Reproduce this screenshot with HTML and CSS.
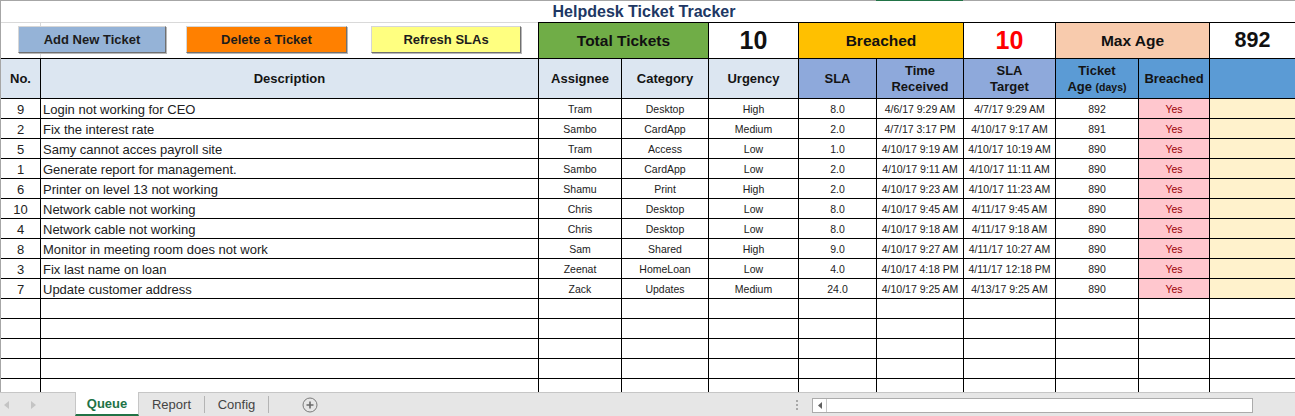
FILE: index.html
```html
<!DOCTYPE html>
<html lang="en">
<head>
  <meta charset="UTF-8" />
  <title>Helpdesk Ticket Tracker</title>
  <link rel="stylesheet" href="styles.css">
</head>
<body>

  <div class="sheet">
    <!-- Title -->
    <div class="title-row">
      <span class="sheet-title">Helpdesk Ticket Tracker</span>
    </div>

    <!-- Buttons + summary -->
    <div class="kpi-row">
      <div class="actions">
        <button class="btn btn-add" type="button">Add New Ticket</button>
        <button class="btn btn-delete" type="button">Delete a Ticket</button>
        <button class="btn btn-refresh" type="button">Refresh SLAs</button>
      </div>
      <div class="kpi kpi-total">Total Tickets</div>
      <div class="kpi kpi-value">10</div>
      <div class="kpi kpi-breached">Breached</div>
      <div class="kpi kpi-value kpi-red">10</div>
      <div class="kpi kpi-age">Max Age</div>
      <div class="kpi kpi-value kpi-small">892</div>
    </div>

    <table class="tickets">
      <colgroup>
        <col class="c-no">
        <col class="c-desc">
        <col class="c-assignee">
        <col class="c-category">
        <col class="c-urgency">
        <col class="c-sla">
        <col class="c-received">
        <col class="c-target">
        <col class="c-age">
        <col class="c-breached">
        <col class="c-extra">
      </colgroup>
      <thead>
        <tr>
          <th class="h-light">No.</th>
          <th class="h-light">Description</th>
          <th class="h-light">Assignee</th>
          <th class="h-light">Category</th>
          <th class="h-light">Urgency</th>
          <th class="h-mid">SLA</th>
          <th class="h-mid">Time<br>Received</th>
          <th class="h-mid">SLA<br>Target</th>
          <th class="h-dark">Ticket<br>Age <span class="days">(days)</span></th>
          <th class="h-dark">Breached</th>
          <th class="h-dark"></th>
        </tr>
      </thead>
      <tbody>
        <tr><td class="num">9</td><td class="desc">Login not working for CEO</td><td>Tram</td><td>Desktop</td><td>High</td><td>8.0</td><td>4/6/17 9:29 AM</td><td>4/7/17 9:29 AM</td><td>892</td><td class="yes">Yes</td><td class="note"></td></tr>
        <tr><td class="num">2</td><td class="desc">Fix the interest rate</td><td>Sambo</td><td>CardApp</td><td>Medium</td><td>2.0</td><td>4/7/17 3:17 PM</td><td>4/10/17 9:17 AM</td><td>891</td><td class="yes">Yes</td><td class="note"></td></tr>
        <tr><td class="num">5</td><td class="desc">Samy cannot acces payroll site</td><td>Tram</td><td>Access</td><td>Low</td><td>1.0</td><td>4/10/17 9:19 AM</td><td>4/10/17 10:19 AM</td><td>890</td><td class="yes">Yes</td><td class="note"></td></tr>
        <tr><td class="num">1</td><td class="desc">Generate report for management.</td><td>Sambo</td><td>CardApp</td><td>Low</td><td>2.0</td><td>4/10/17 9:11 AM</td><td>4/10/17 11:11 AM</td><td>890</td><td class="yes">Yes</td><td class="note"></td></tr>
        <tr><td class="num">6</td><td class="desc">Printer on level 13 not working</td><td>Shamu</td><td>Print</td><td>High</td><td>2.0</td><td>4/10/17 9:23 AM</td><td>4/10/17 11:23 AM</td><td>890</td><td class="yes">Yes</td><td class="note"></td></tr>
        <tr><td class="num">10</td><td class="desc">Network cable not working</td><td>Chris</td><td>Desktop</td><td>Low</td><td>8.0</td><td>4/10/17 9:45 AM</td><td>4/11/17 9:45 AM</td><td>890</td><td class="yes">Yes</td><td class="note"></td></tr>
        <tr><td class="num">4</td><td class="desc">Network cable not working</td><td>Chris</td><td>Desktop</td><td>Low</td><td>8.0</td><td>4/10/17 9:18 AM</td><td>4/11/17 9:18 AM</td><td>890</td><td class="yes">Yes</td><td class="note"></td></tr>
        <tr><td class="num">8</td><td class="desc">Monitor in meeting room does not work</td><td>Sam</td><td>Shared</td><td>High</td><td>9.0</td><td>4/10/17 9:27 AM</td><td>4/11/17 10:27 AM</td><td>890</td><td class="yes">Yes</td><td class="note"></td></tr>
        <tr><td class="num">3</td><td class="desc">Fix last name on loan</td><td>Zeenat</td><td>HomeLoan</td><td>Low</td><td>4.0</td><td>4/10/17 4:18 PM</td><td>4/11/17 12:18 PM</td><td>890</td><td class="yes">Yes</td><td class="note"></td></tr>
        <tr><td class="num">7</td><td class="desc">Update customer address</td><td>Zack</td><td>Updates</td><td>Medium</td><td>24.0</td><td>4/10/17 9:25 AM</td><td>4/13/17 9:25 AM</td><td>890</td><td class="yes">Yes</td><td class="note"></td></tr>
        <tr><td></td><td></td><td></td><td></td><td></td><td></td><td></td><td></td><td></td><td></td><td></td></tr>
        <tr><td></td><td></td><td></td><td></td><td></td><td></td><td></td><td></td><td></td><td></td><td></td></tr>
        <tr><td></td><td></td><td></td><td></td><td></td><td></td><td></td><td></td><td></td><td></td><td></td></tr>
        <tr><td></td><td></td><td></td><td></td><td></td><td></td><td></td><td></td><td></td><td></td><td></td></tr>
        <tr><td></td><td></td><td></td><td></td><td></td><td></td><td></td><td></td><td></td><td></td><td></td></tr>
      </tbody>
    </table>
  </div>

  <!-- Sheet tabs -->
  <div class="tabbar">
    <div class="tab-nav">
      <svg width="6" height="8" viewBox="0 0 6 8"><path d="M5 0 L0 4 L5 8 Z" fill="#c4c4c4"/></svg>
      <svg width="6" height="8" viewBox="0 0 6 8"><path d="M1 0 L6 4 L1 8 Z" fill="#c4c4c4"/></svg>
    </div>
    <div class="tab tab-active">Queue</div>
    <div class="tab tab-report">Report</div>
    <span class="tab-sep"></span>
    <div class="tab tab-config">Config</div>
    <span class="tab-sep"></span>
    <div class="tab-add">
      <svg width="16" height="16" viewBox="0 0 16 16">
        <circle cx="8" cy="8" r="7" fill="none" stroke="#7a7a7a" stroke-width="1"/>
        <path d="M8 4.5 V11.5 M4.5 8 H11.5" stroke="#6a6a6a" stroke-width="1.6"/>
      </svg>
    </div>
    <div class="spacer"></div>
    <div class="split-dots"><i></i><i></i><i></i></div>
    <div class="h-scroll">
      <div class="h-scroll-btn">
        <svg width="4" height="7" viewBox="0 0 4 7"><path d="M4 0 L0 3.5 L4 7 Z" fill="#606060"/></svg>
      </div>
    </div>
  </div>

</body>
</html>
```

FILE: styles.css
```css
:root {
  --grid: #000000;
  --soft-grid: #d9d9d9;
  --head-light: #dce6f1;
  --head-mid: #8ea9db;
  --head-dark: #5b9bd5;
  --text: #1a1a1a;
}

* {
  box-sizing: border-box;
}

html, body {
  margin: 0;
  padding: 0;
  overflow: hidden;
}

body {
  width: 1295px;
  height: 416px;
  font-family: "Liberation Sans", Arial, sans-serif;
  color: var(--text);
  background: #ffffff;
}

.sheet {
  height: 392px;
  overflow: hidden;
  border-left: 1px solid #a6a6a6;
}

/* title row */
.title-row {
  height: 22px;
  display: flex;
  align-items: center;
  justify-content: center;
  padding: 1px 8px 0 0;
  background: linear-gradient(to right, #a6a6a6 875px, #217346 875px, #217346 962px, #a6a6a6 962px) top left / 100% 1px no-repeat;
}

.sheet-title {
  font-size: 16px;
  font-weight: bold;
  color: #203764;
}

/* buttons and summary */
.kpi-row {
  height: 36px;
  display: grid;
  grid-template-columns: 537px 170px 90px 165px 92px 154px 1fr;
}

.actions {
  display: flex;
  align-items: center;
  padding: 0 0 2px 17px;
  border-top: 1px solid var(--soft-grid);
  background: linear-gradient(to right, transparent 39px, var(--soft-grid) 39px, var(--soft-grid) 40px, transparent 40px);
}

.btn {
  height: 27px;
  font-family: inherit;
  font-size: 13px;
  font-weight: bold;
  color: #1c1c1c;
  border: 1px solid;
  border-color: #d6d6d6 #707070 #707070 #d6d6d6;
  padding: 0;
  box-shadow: 1px 1px 0 #b8b8b8;
}

.btn-add {
  width: 148px;
  background: #95b3d7;
}

.btn-delete {
  width: 161px;
  margin-left: 20px;
  background: #ff8000;
}

.btn-refresh {
  width: 150px;
  margin-left: 24px;
  background: #ffff80;
}

.kpi {
  display: flex;
  align-items: center;
  justify-content: center;
  border-top: 1px solid var(--grid);
  border-left: 1px solid var(--grid);
  font-size: 15.5px;
  font-weight: bold;
  color: #111;
}

.kpi-total {
  background: #70ad47;
}

.kpi-breached {
  background: #ffc000;
}

.kpi-age {
  background: #f8cbad;
}

.kpi-value {
  background: #ffffff;
  font-size: 25px;
}

.kpi-red {
  color: #ff0000;
}

.kpi-small {
  font-size: 21.5px;
}

/* ticket table */
.tickets {
  width: 1295px;
  table-layout: fixed;
  border-collapse: separate;
  border-spacing: 0;
  border-top: 1px solid var(--grid);
}

.c-no { width: 40px; }
.c-desc { width: 498px; }
.c-assignee { width: 83px; }
.c-category { width: 87px; }
.c-urgency { width: 90px; }
.c-sla { width: 78px; }
.c-received { width: 87px; }
.c-target { width: 92px; }
.c-age { width: 83px; }
.c-breached { width: 71px; }
.c-extra { width: 86px; }

.tickets th,
.tickets td {
  border-right: 1px solid var(--grid);
  border-bottom: 1px solid var(--grid);
  padding: 0;
  white-space: nowrap;
  overflow: hidden;
}

.tickets thead tr {
  height: 40px;
}

.tickets th {
  font-size: 13px;
  font-weight: bold;
  line-height: 16px;
  text-align: center;
  vertical-align: middle;
  color: #141414;
}

.h-light { background: var(--head-light); }
.h-mid { background: var(--head-mid); }
.h-dark { background: var(--head-dark); }

.days {
  font-size: 10.5px;
}

.tickets tbody tr {
  height: 20px;
}

.tickets td {
  height: 20px;
  font-size: 10.5px;
  line-height: 17px;
  text-align: center;
  vertical-align: middle;
  color: #222;
  padding-top: 2px;
}

.tickets td.num {
  font-size: 13px;
}

.tickets td.desc {
  text-align: left;
  font-size: 13px;
  padding-left: 2px;
}

.tickets td.yes {
  background: #ffc7ce;
  color: #9c0006;
}

.tickets td.note {
  background: #fff2cc;
}

/* sheet tabs */
.tabbar {
  height: 24px;
  display: flex;
  align-items: stretch;
  background: #e6e6e6;
  border-top: 1px solid #c6c6c6;
  font-size: 13px;
}

.tab-nav {
  width: 75px;
  display: flex;
  align-items: center;
  gap: 20px;
  padding-left: 4px;
}

.tab {
  display: flex;
  align-items: center;
  justify-content: center;
  color: #444;
}

.tab-active {
  width: 64px;
  margin-top: -1px;
  background: #ffffff;
  border-left: 1px solid #c6c6c6;
  border-right: 1px solid #c6c6c6;
  border-bottom: 2px solid #217346;
  color: #217346;
  font-weight: bold;
}

.tab-report {
  width: 65px;
}

.tab-config {
  width: 63px;
}

.tab-sep {
  width: 1px;
  height: 17px;
  align-self: center;
  background: #b4b4b4;
}

.tab-add {
  display: flex;
  align-items: center;
  padding-left: 33px;
}

.spacer {
  flex: 1;
}

.split-dots {
  display: flex;
  flex-direction: column;
  justify-content: center;
  gap: 2px;
  margin-right: 14px;
}

.split-dots i {
  display: block;
  width: 2px;
  height: 2px;
  background: #a8a8a8;
}

.h-scroll {
  width: 441px;
  height: 15px;
  align-self: center;
  margin: 2px 42px 0 0;
  background: #ffffff;
  border: 1px solid #ababab;
  display: flex;
}

.h-scroll-btn {
  width: 14px;
  border-right: 1px solid #c8c8c8;
  display: flex;
  align-items: center;
  justify-content: center;
}
```
